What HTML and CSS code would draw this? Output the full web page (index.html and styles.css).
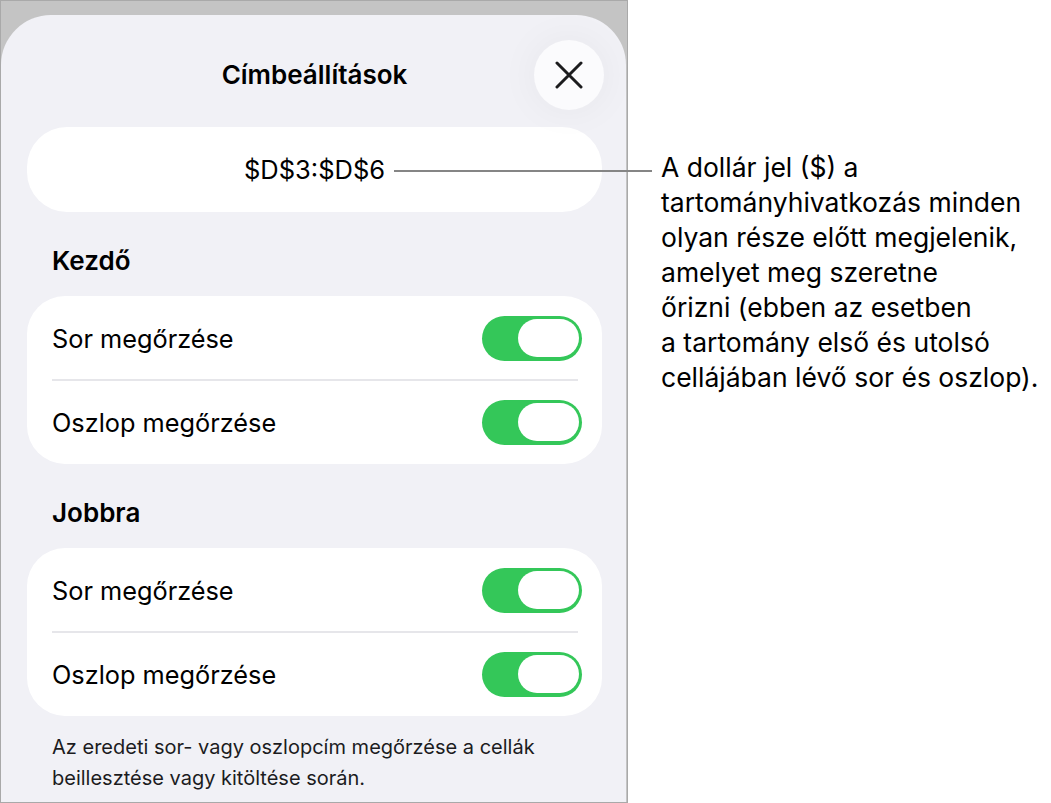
FILE: index.html
```html
<!DOCTYPE html>
<html lang="hu">
<head>
<meta charset="utf-8">
<title>Címbeállítások</title>
<link rel="stylesheet" href="styles.css">
</head>
<body>
<div class="page">
  <div class="frame">
    <div class="sheet">
      <div class="header">
        <div class="title">Címbeállítások</div>
        <button class="close" aria-label="Bezárás">
          <svg width="28" height="28" viewBox="0 0 28 28"><path d="M2 2 L26 26 M26 2 L2 26" stroke="#1c1c1e" stroke-width="3" stroke-linecap="round" fill="none"/></svg>
        </button>
      </div>
      <div class="address"><span class="ref">$D$3:$D$6</span></div>

      <div class="section-title">Kezdő</div>
      <div class="group">
        <div class="row"><span>Sor megőrzése</span><span class="toggle"><span class="knob"></span></span></div>
        <div class="divider"></div>
        <div class="row"><span>Oszlop megőrzése</span><span class="toggle"><span class="knob"></span></span></div>
      </div>

      <div class="section-title">Jobbra</div>
      <div class="group">
        <div class="row"><span>Sor megőrzése</span><span class="toggle"><span class="knob"></span></span></div>
        <div class="divider"></div>
        <div class="row"><span>Oszlop megőrzése</span><span class="toggle"><span class="knob"></span></span></div>
      </div>

      <p class="footer">Az eredeti sor- vagy oszlopcím megőrzése a cellák<br>beillesztése vagy kitöltése során.</p>
    </div>
  </div>
  <div class="note">A dollár jel ($) a<br>tartományhivatkozás minden<br>olyan része előtt megjelenik,<br>amelyet meg szeretne<br>őrizni (ebben az esetben<br>a tartomány első és utolsó<br>cellájában lévő sor és oszlop).</div>
</div>
</body>
</html>
```

FILE: styles.css
```css
* { box-sizing: border-box; }
html, body { margin: 0; padding: 0; background: #fff; }
body { font-family: Inter, "Noto Sans", "Liberation Sans", sans-serif; color: #000; }

.page { display: flex; align-items: flex-start; width: 1051px; height: 803px; overflow: hidden; }

.frame {
  width: 628px;
  height: 803px;
  flex: none;
  border: 1px solid #a9a9a9;
  background: #c4c4c4;
  padding: 14px 1px 0 0;
}

.sheet {
  height: 100%;
  background: #f1f1f6;
  border-radius: 50px 50px 0 0;
  padding: 0 24px 0 26px;
}

.header {
  display: grid;
  grid-template-columns: 1fr auto 1fr;
  align-items: center;
  padding-top: 25px;
  height: 95px;
}
.title {
  grid-column: 2;
  font-size: 26px;
  line-height: 32px;
  font-weight: 600;
}
.close {
  grid-column: 3;
  justify-self: end;
  margin-right: -2px;
  width: 70px;
  height: 70px;
  border-radius: 50%;
  border: none;
  background: #fbfbfd;
  box-shadow: 0 0 40px rgba(0,0,0,0.05);
  display: flex;
  align-items: center;
  justify-content: center;
  padding: 0;
}

.address {
  margin-top: 17px;
  height: 85px;
  background: #fff;
  border-radius: 40px;
  display: flex;
  align-items: center;
  justify-content: center;
  font-size: 25.5px;
}
.ref { position: relative; line-height: 32px; }
.ref::after {
  content: "";
  position: absolute;
  left: calc(100% + 9px);
  top: 50%;
  width: 258px;
  height: 2px;
  background: #858585;
}

.section-title {
  margin: 35px 0 21px 25px;
  height: 28px;
  line-height: 28px;
  font-size: 26px;
  font-weight: 600;
}

.group {
  background: #fff;
  border-radius: 38px;
  padding: 0 20px 0 25px;
}
.row {
  height: 84px;
  display: flex;
  align-items: center;
  justify-content: space-between;
  font-size: 25.3px;
}
.divider {
  height: 2px;
  margin: -1px 4px -1px 0;
  background: #e6e6ea;
  position: relative;
}

.toggle {
  width: 100px;
  height: 45px;
  border-radius: 23px;
  background: #34c759;
  display: flex;
  align-items: center;
  justify-content: flex-end;
  padding-right: 3px;
}
.knob {
  width: 61px;
  height: 38px;
  border-radius: 19px;
  background: #fff;
}

.footer {
  margin: 16px 0 0 25px;
  font-size: 20px;
  line-height: 31px;
  color: #1c1c1e;
}

.note {
  margin: 150px 0 0 33px;
  font-size: 26.5px;
  line-height: 35px;
  white-space: nowrap;
}
```
